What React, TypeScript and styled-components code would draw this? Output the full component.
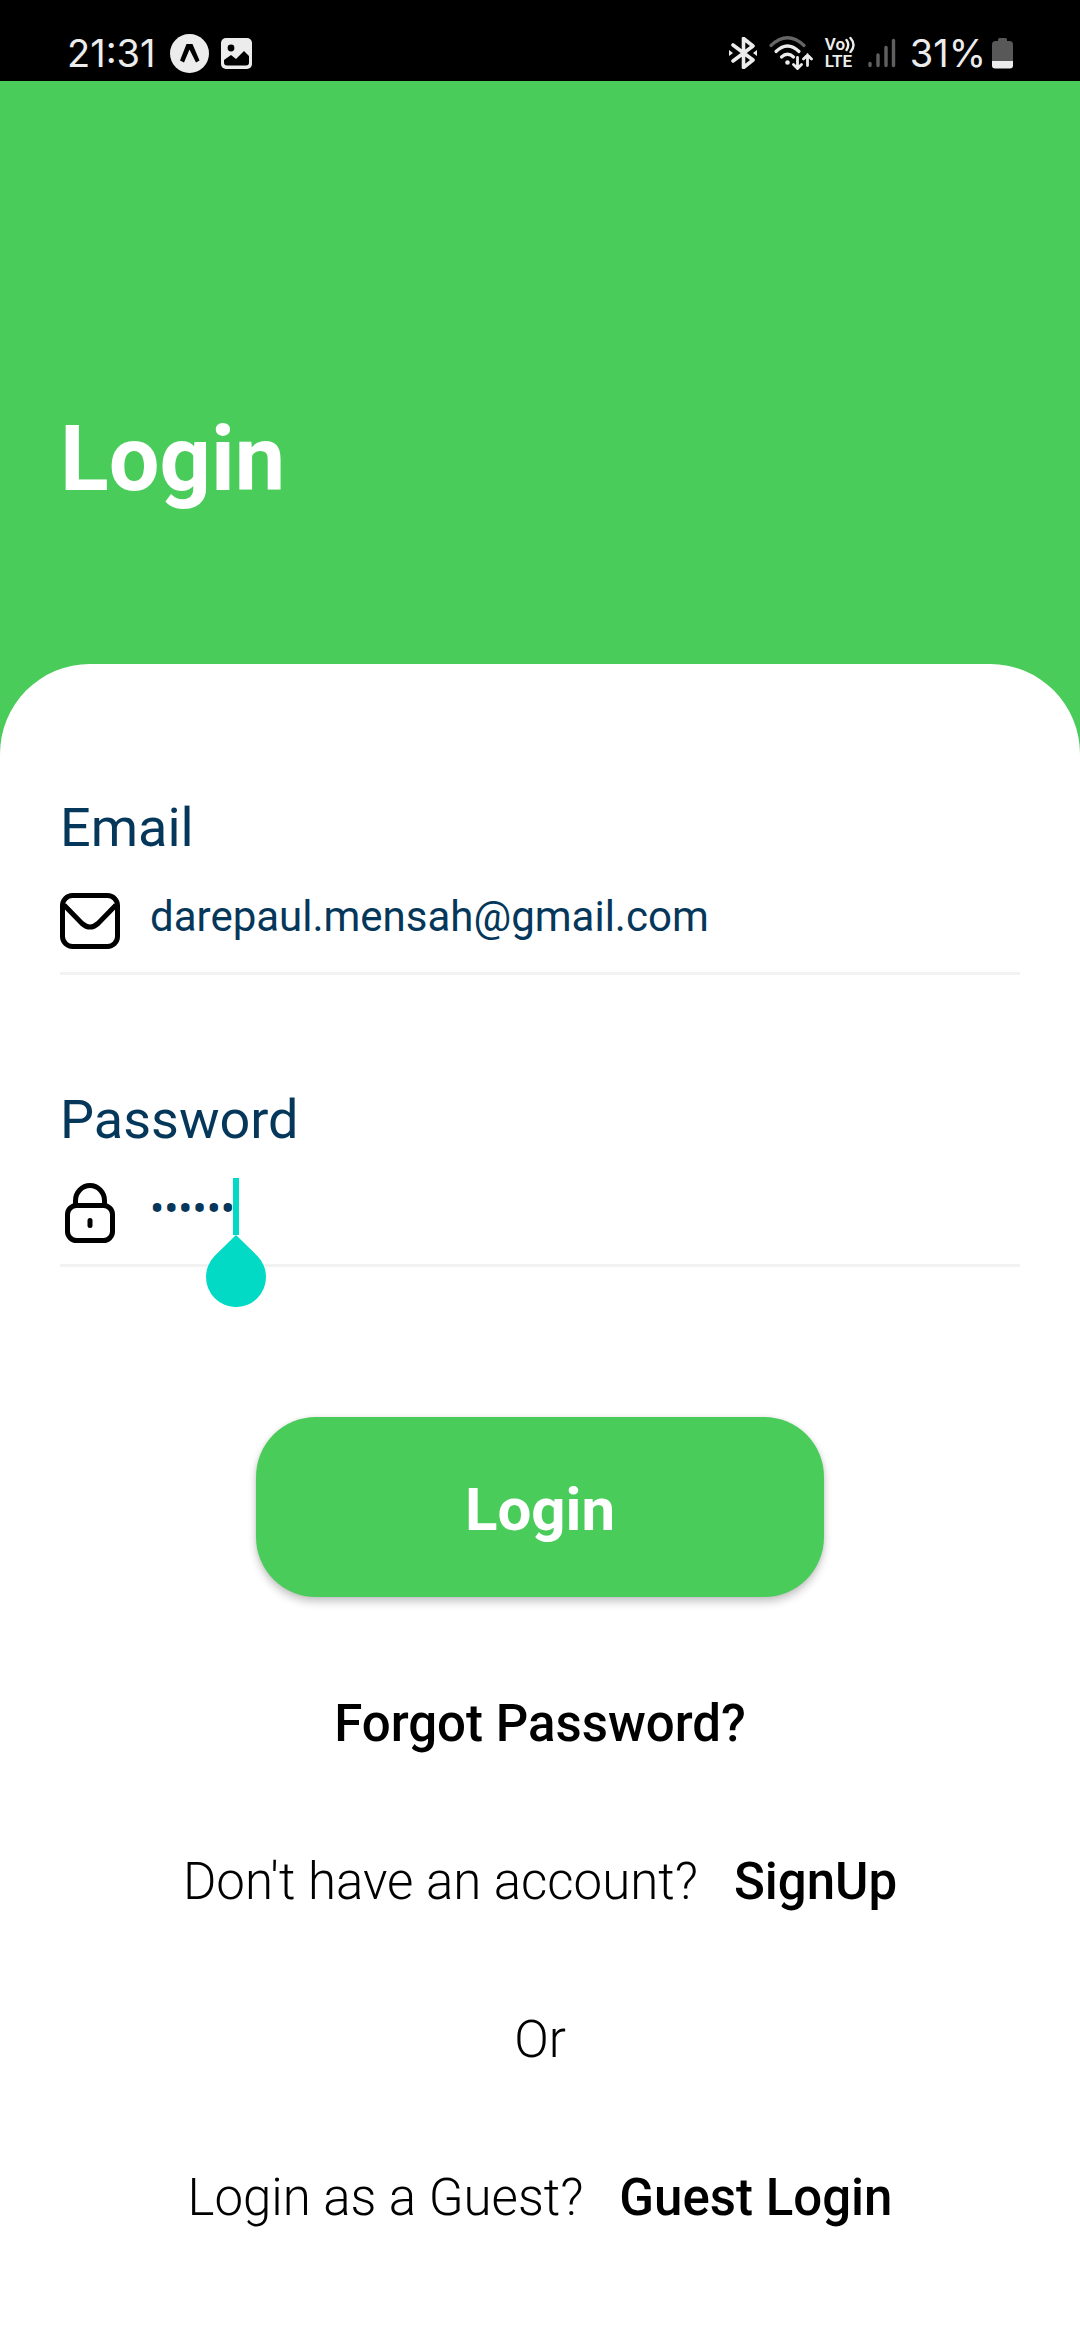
import React, { useState } from "react";
import styled, { createGlobalStyle } from "styled-components";

const GREEN = "#4acc5b";
const NAVY = "#05375a";
const TEAL = "#03dac5";

const GlobalStyle = createGlobalStyle`
  *, *::before, *::after { box-sizing: border-box; }
  body { margin: 0; background: #fff; font-family: Roboto, "Liberation Sans", sans-serif; }
`;

const Screen = styled.div`
  min-height: 100vh;
  display: flex;
  flex-direction: column;
  background: ${GREEN};
`;

const StatusBar = styled.div`
  height: 81px;
  padding: 26px 67px 0 67px;
  display: flex;
  justify-content: space-between;
  align-items: flex-start;
  background: #000;
  color: #ececec;
  svg { display: block; flex: none; }
`;

const StatusGroup = styled.div<{ $gap: number }>`
  display: flex;
  align-items: center;
  gap: ${(p) => p.$gap}px;
`;

const StatusText = styled.span`
  font: 400 38px/54px Inter, Roboto, sans-serif;
`;

const VolteMark = styled.span`
  display: grid;
  width: 31px;
  font: 600 17px/17px Roboto, sans-serif;
`;

const VolteLine = styled.span`
  display: flex;
  align-items: center;
`;

const Header = styled.header`
  padding: 319px 60px 144px;
`;

const Title = styled.h1`
  margin: 0;
  font-size: 90px;
  line-height: 120px;
  font-weight: 700;
  color: #fff;
`;

const Card = styled.main`
  flex: 1;
  padding: 128px 60px 56px;
  border-radius: 90px 90px 0 0;
  background: #fff;
`;

const Form = styled.form`
  display: flex;
  flex-direction: column;
`;

const Field = styled.div`
  margin-bottom: 109px;
`;

const Label = styled.label`
  display: block;
  font-size: 54px;
  line-height: 72px;
  color: ${NAVY};
`;

const InputRow = styled.div`
  display: flex;
  align-items: flex-start;
  gap: 30px;
  padding: 27px 0 21px;
  border-bottom: 3px solid #f2f2f2;
  svg { display: block; flex: none; }
`;

const InputBox = styled.div`
  position: relative;
  flex: 1;
  min-width: 0;
`;

const Input = styled.input`
  display: block;
  width: 100%;
  height: 52px;
  padding: 0;
  border: 0;
  outline: 0;
  background: transparent;
  font: 400 42px/52px Roboto, sans-serif;
  color: ${NAVY};
  caret-color: ${TEAL};
`;

const Caret = styled.span`
  position: absolute;
  left: 83px;
  top: -5px;
  width: 6px;
  height: 57px;
  background: ${TEAL};
`;

const CaretHandle = styled.svg`
  position: absolute;
  left: 56px;
  top: 52px;
`;

const SubmitButton = styled.button`
  align-self: center;
  height: 180px;
  margin-top: 41px;
  padding: 6px 209px 0;
  border: 0;
  border-radius: 60px;
  background: ${GREEN};
  box-shadow: 0 5px 9px rgba(0, 0, 0, 0.22), 0 0 4px rgba(0, 0, 0, 0.08);
  font: 700 60px/80px Roboto, sans-serif;
  color: #fff;
`;

const Links = styled.nav`
  display: flex;
  flex-direction: column;
  align-items: center;
  gap: 90px;
  padding-top: 93px;
`;

const LinkRow = styled.div`
  display: flex;
  gap: 36px;
  font-size: 51px;
  line-height: 68px;
  font-weight: 300;
  color: #000;
`;

const TextLink = styled.a`
  font-weight: 500;
  color: inherit;
  text-decoration: none;
`;

const ExpoIcon = () => (
  <svg width="39" height="39" viewBox="0 0 39 39" aria-hidden="true">
    <circle cx="19.5" cy="19.5" r="19.5" fill="#ececec" />
    <path d="M16.5 10h6L29.5 26.500l-3.500 2L19.500 15.500 14 28.500l-4-2z" fill="#000" />
  </svg>
);

const PictureIcon = () => (
  <svg width="31" height="31" viewBox="0 0 31 31" aria-hidden="true">
    <rect width="31" height="31" rx="5" fill="#ececec" />
    <circle cx="10" cy="10" r="3.4" fill="#000" />
    <path d="M3 22l7-5 5 4 8-8 5 5v6.500a3 3 0 0 1-3 3H6a3 3 0 0 1-3-3z" fill="#000" />
  </svg>
);

const BluetoothIcon = () => (
  <svg width="28" height="32" viewBox="0 0 28 32" aria-hidden="true">
    <path d="M4 8l20 15-9.500 7.500V1.500L24 9 4 24" fill="none" stroke="#ececec" strokeWidth="3.600" strokeLinejoin="round" strokeLinecap="round" />
    <path d="M0 13l4 3-4 3zM28 13l-4 3 4 3z" fill="#ececec" />
  </svg>
);

const WifiIcon = () => (
  <svg width="44" height="34" viewBox="0 0 44 34" aria-hidden="true" fill="none" strokeWidth="3.200" strokeLinecap="round">
    <path d="M2 9.500Q18.500-6 35 9.500" stroke="#666" />
    <path d="M7 15.500Q18.500 4.500 30 15.500M12.500 21Q18.500 15.500 24.500 21" stroke="#ececec" />
    <circle cx="18.500" cy="26.500" r="2.300" fill="#ececec" />
    <path d="M28.500 21.500V32M24.500 28.500l4 4 4-4M38.500 29.500V19M34.500 23l4-4 4 4" stroke="#ececec" strokeWidth="2.800" />
  </svg>
);

const VolteIcon = () => (
  <VolteMark>
    <VolteLine>
      Vo
      <svg width="10" height="17" viewBox="0 0 10 17" aria-hidden="true">
        <path d="M1.500 4Q5 8.500 1.500 14M5.500 2Q11.500 9 5.500 16" fill="none" stroke="#ececec" strokeWidth="2.400" strokeLinecap="round" />
      </svg>
    </VolteLine>
    <VolteLine>LTE</VolteLine>
  </VolteMark>
);

const SignalIcon = () => (
  <svg width="28" height="30" viewBox="0 0 28 30" aria-hidden="true" stroke="#606060" strokeWidth="3.400" strokeLinecap="round">
    <path d="M2 25.500V27.500M10 17V27.500M18 9.500V27.500M25.500 2.500V27.500" />
  </svg>
);

const BatteryIcon = () => (
  <svg width="21" height="32" viewBox="0 0 21 32" aria-hidden="true">
    <path d="M6 4V2.500A1.500 1.500 0 0 1 7.500 1h6A1.500 1.500 0 0 1 15 2.500V4h2.500A3.500 3.500 0 0 1 21 7.500V24H0V7.500A3.500 3.500 0 0 1 3.500 4z" fill="#585858" />
    <path d="M0 24h21v4.500a3 3 0 0 1-3 3H3a3 3 0 0 1-3-3z" fill="#ececec" />
  </svg>
);

const MailIcon = () => (
  <svg width="60" height="60" viewBox="0 0 60 60" aria-hidden="true" fill="none" stroke="#000" strokeWidth="5" strokeLinejoin="round">
    <rect x="2.500" y="4.500" width="55" height="51" rx="10" />
    <path d="M4 14l18 18.500q8 7 16 0L56 14" />
  </svg>
);

const LockIcon = () => (
  <svg width="60" height="60" viewBox="0 0 60 60" aria-hidden="true" fill="none" stroke="#000" strokeWidth="5">
    <rect x="7.500" y="22.500" width="45" height="35" rx="9" />
    <path d="M15.500 22.500v-5a14.500 15 0 0 1 29 0v5" />
    <path d="M30 37.500v5" strokeLinecap="round" />
  </svg>
);

export default function App() {
  const [email, setEmail] = useState("darepaul.mensah@gmail.com");
  const [password, setPassword] = useState("secret");

  return (
    <Screen>
      <GlobalStyle />
      <StatusBar>
        <StatusGroup $gap={14}>
          <StatusText>21:31</StatusText>
          <StatusGroup $gap={12}>
            <ExpoIcon />
            <PictureIcon />
          </StatusGroup>
        </StatusGroup>
        <StatusGroup $gap={14}>
          <StatusGroup $gap={12}>
            <BluetoothIcon />
            <WifiIcon />
            <VolteIcon />
            <SignalIcon />
          </StatusGroup>
          <StatusGroup $gap={6}>
            <StatusText>31%</StatusText>
            <BatteryIcon />
          </StatusGroup>
        </StatusGroup>
      </StatusBar>

      <Header>
        <Title>Login</Title>
      </Header>

      <Card>
        <Form onSubmit={(e) => e.preventDefault()}>
          <Field>
            <Label htmlFor="email">Email</Label>
            <InputRow>
              <MailIcon />
              <InputBox>
                <Input id="email" type="email" value={email} onChange={(e) => setEmail(e.target.value)} />
              </InputBox>
            </InputRow>
          </Field>
          <Field>
            <Label htmlFor="password">Password</Label>
            <InputRow>
              <LockIcon />
              <InputBox>
                <Input id="password" type="password" value={password} onChange={(e) => setPassword(e.target.value)} />
                <Caret />
                <CaretHandle width="60" height="72" viewBox="0 0 60 72" aria-hidden="true">
                  <path d="M30 0L51.200 20.800a30 30 0 1 1-42.400 0z" fill={TEAL} />
                </CaretHandle>
              </InputBox>
            </InputRow>
          </Field>
          <SubmitButton type="submit">Login</SubmitButton>
        </Form>

        <Links>
          <LinkRow>
            <TextLink href="#forgot">Forgot Password?</TextLink>
          </LinkRow>
          <LinkRow>
            <span>Don't have an account?</span>
            <TextLink href="#signup">SignUp</TextLink>
          </LinkRow>
          <LinkRow>
            <span>Or</span>
          </LinkRow>
          <LinkRow>
            <span>Login as a Guest?</span>
            <TextLink href="#guest">Guest Login</TextLink>
          </LinkRow>
        </Links>
      </Card>
    </Screen>
  );
}
